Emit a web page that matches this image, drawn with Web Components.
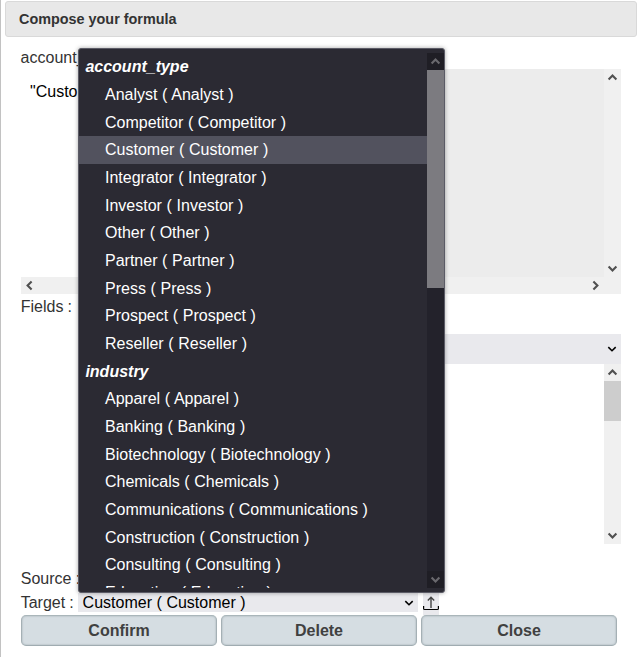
<!DOCTYPE html>
<html lang="en">
<head>
<meta charset="utf-8">
<title>Compose your formula</title>
<style>
html,body{margin:0;height:657px;background:#fff;overflow:hidden}
body{font:16px/18px "Liberation Sans",Arial,sans-serif;color:#333}
</style>
</head>
<body>
<formula-dialog></formula-dialog>
<script>
const define = (name, html, setup) => customElements.define(name, class extends HTMLElement {
  connectedCallback() {
    if (this.shadowRoot) return;
    const root = this.attachShadow({ mode: 'open' });
    const t = document.createElement('template');
    t.innerHTML = html;
    root.append(t.content.cloneNode(true));
    if (setup) setup(this, root);
  }
});

define('chevron-icon', `<style>
:host{display:flex;width:17px;height:17px;flex:none;align-items:center;justify-content:center;color:#505050}
:host([dir=down]) svg{transform:rotate(180deg)}
:host([dir=left]) svg{transform:rotate(-90deg)}
:host([dir=right]) svg{transform:rotate(90deg)}
svg{display:block}
</style><svg width="17" height="17" viewBox="0 0 17 17"><path d="M4.6 10.6 8.5 6.6l3.9 4" fill="none" stroke="currentColor" stroke-width="2.1"/></svg>`);

define('select-arrow', `<style>:host{display:block;width:10px;height:8px;flex:none;color:#000}svg{display:block}</style>
<svg width="10" height="8" viewBox="0 0 10 8"><path d="M1.3 2.1 5 5.7l3.7-3.6" fill="none" stroke="currentColor" stroke-width="1.6"/></svg>`);

define('scroll-bar', `<style>
:host{display:flex;flex-direction:column;justify-content:space-between;width:17px;box-sizing:border-box;background:#f0f0f0}
:host([horizontal]){flex-direction:row;width:auto;height:17px}
.track{flex:1;min-height:0}
.thumb{height:var(--thumb,0);background:var(--thumb-color,#cdcdcd)}
chevron-icon{color:var(--arrow,#505050);background:var(--cap,transparent)}
</style><chevron-icon class="a"></chevron-icon><div class="track"><div class="thumb"></div></div><chevron-icon class="b"></chevron-icon>`,
(el, root) => {
  const h = el.hasAttribute('horizontal');
  root.querySelector('.a').setAttribute('dir', h ? 'left' : 'up');
  root.querySelector('.b').setAttribute('dir', h ? 'right' : 'down');
});

define('dialog-header', `<style>
:host{display:flex;align-items:center;box-sizing:border-box;height:36px;margin:1px 3px 0 5px;padding:0 13px;border:1px solid #d9d9d9;border-radius:3px;background:#e8e8e8;font-size:14.4px;font-weight:bold;color:#333}
</style><slot></slot>`);

define('push-button', `<style>
:host{display:block}
button{display:block;width:100%;height:31px;padding:0;border:1.5px solid #a5b1b6;border-color:#aab6ba #a5b0b5 #a0acb1;border-radius:5px;background:#d5dde2;font:bold 16px/27px "Liberation Sans",Arial,sans-serif;color:#404040;box-shadow:inset 0 0 2px #98a5aa}
</style><button><slot></slot></button>`);

define('option-group', `<style>
:host{display:block}
.label{height:27.68px;line-height:27.68px;padding-left:6.4px;font-weight:bold;font-style:italic}
</style><div class="label"></div><slot></slot>`,
(el, root) => { root.querySelector('.label').textContent = el.getAttribute('label'); });

define('option-row', `<style>
:host{display:block;height:27.68px;line-height:27.68px;padding-left:26px;white-space:nowrap;word-spacing:.2px}
:host([selected]){background:#52525e}
</style><slot></slot>`);

define('option-popup', `<style>
:host{display:flex;box-sizing:border-box;width:367px;height:545px;padding:4px 0;border:1px solid #5b5b66;border-radius:3px;background:#2b2a33;color:#fff;box-shadow:0 0 4px rgba(0,0,0,.35)}
.list{flex:1;overflow:hidden;padding-top:.3px}
scroll-bar{background:#23222b;--thumb:218px;--thumb-color:#7c7b80;--arrow:#6a696e;--cap:#1f1e25}
</style><div class="list"><slot></slot></div><scroll-bar></scroll-bar>`);

define('formula-dialog', `<style>
:host{display:block;position:relative;box-sizing:border-box;width:640px;height:657px;border-left:1px solid #c2c2c2;margin:0;overflow:hidden}
dialog-header{margin-left:4px}
.body{display:flex;flex-direction:column;width:600px;margin-left:20px;padding-top:12px}
.name{height:20px;text-indent:-.4px}
.editor{display:grid;grid-template-columns:1fr 217px 17px;grid-template-rows:208px 17px}
.formula{padding:14px 9px 0;color:#000}
.pane{background:#ececec}
.editor scroll-bar[horizontal]{grid-column:1/3}
.corner{background:#f0f0f0}
.fields{height:40px;line-height:26px;text-indent:-.3px;word-spacing:-.3px}
.filter{display:flex;align-items:center;justify-content:flex-end;height:30px;padding-right:4px;background:#e9e9ed;margin-left:57px}
.list{display:flex;justify-content:flex-end;height:180px}
.list scroll-bar{--thumb:40px}
.source{height:24px;padding-top:25px;line-height:20px;text-indent:-.3px}
.target{display:flex;height:22px}
.target label{width:57px;line-height:20px;text-indent:-.3px;word-spacing:-.3px}
.select{display:flex;align-items:center;justify-content:space-between;box-sizing:border-box;width:340px;height:19px;padding:0 4px 0 5px;background:#e9e9ed;color:#000}
.select span{text-indent:-.4px;word-spacing:.1px}
.load{width:16px;height:22px;margin-left:5px;background:#e9e9ed}
.load svg{display:block}
.buttons{display:grid;grid-template-columns:repeat(3,196px);gap:4px}
option-popup{position:absolute;left:77px;top:48px}
</style>
<dialog-header>Compose your formula</dialog-header>
<div class="body">
  <div class="name">account_</div>
  <div class="editor">
    <div class="formula">"Custo</div><div class="pane"></div><scroll-bar></scroll-bar>
    <scroll-bar horizontal></scroll-bar><div class="corner"></div>
  </div>
  <div class="fields">Fields :</div>
  <div class="filter"><select-arrow></select-arrow></div>
  <div class="list"><scroll-bar></scroll-bar></div>
  <div class="source">Source :</div>
  <div class="target"><label>Target :</label><div class="select"><span>Customer ( Customer )</span><select-arrow></select-arrow></div>
    <div class="load"><svg width="16" height="22" viewBox="0 0 16 22"><path d="M8 15V4.5M4.8 7.4 8 4.2l3.2 3.2" fill="none" stroke="#444" stroke-width="1.4"/><path d="M.6 13v2.4q0 1.1 1.1 1.1h12.6q1.1 0 1.1-1.1V13" fill="none" stroke="#000" stroke-width="1.2"/></svg></div></div>
  <div class="buttons"><push-button>Confirm</push-button><push-button>Delete</push-button><push-button>Close</push-button></div>
</div>
<option-popup>
  <option-group label="account_type">
    <option-row>Analyst ( Analyst )</option-row>
    <option-row>Competitor ( Competitor )</option-row>
    <option-row selected>Customer ( Customer )</option-row>
    <option-row>Integrator ( Integrator )</option-row>
    <option-row>Investor ( Investor )</option-row>
    <option-row>Other ( Other )</option-row>
    <option-row>Partner ( Partner )</option-row>
    <option-row>Press ( Press )</option-row>
    <option-row>Prospect ( Prospect )</option-row>
    <option-row>Reseller ( Reseller )</option-row>
  </option-group>
  <option-group label="industry">
    <option-row>Apparel ( Apparel )</option-row>
    <option-row>Banking ( Banking )</option-row>
    <option-row>Biotechnology ( Biotechnology )</option-row>
    <option-row>Chemicals ( Chemicals )</option-row>
    <option-row>Communications ( Communications )</option-row>
    <option-row>Construction ( Construction )</option-row>
    <option-row>Consulting ( Consulting )</option-row>
    <option-row>Education ( Education )</option-row>
  </option-group>
</option-popup>`);
</script>
</body>
</html>
